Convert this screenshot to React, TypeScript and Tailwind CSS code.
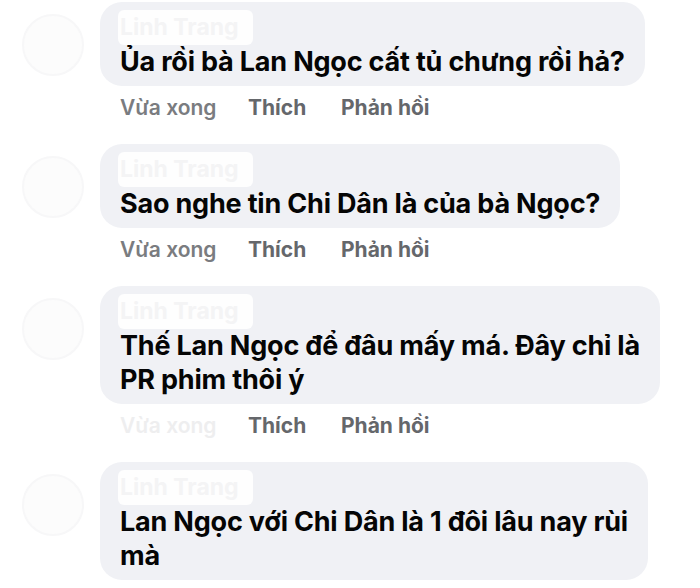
import React from "react"

interface CommentItem {
  lines: string[]
  fadedTime?: boolean
  showActions?: boolean
}

const comments: CommentItem[] = [
  { lines: ["Ủa rồi bà Lan Ngọc cất tủ chưng rồi hả?"], showActions: true },
  { lines: ["Sao nghe tin Chi Dân là của bà Ngọc?"], showActions: true },
  {
    lines: ["Thế Lan Ngọc để đâu mấy má. Đây chỉ là", "PR phim thôi ý"],
    fadedTime: true,
    showActions: true,
  },
  { lines: ["Lan Ngọc với Chi Dân là 1 đôi lâu nay rùi", "mà"] },
]

function Avatar() {
  return (
    <div className="ml-[22px] mt-[12px] h-[62px] w-[62px] shrink-0 rounded-full border-2 border-[#f7f7f8] bg-[#fcfcfc]" />
  )
}

function Comment({ item }: { item: CommentItem }) {
  return (
    <div className="flex">
      <div className="w-[100px] shrink-0">
        <Avatar />
      </div>
      <div className="flex flex-col items-start">
        <div className="rounded-[22px] bg-[#f0f1f5] px-[20px] pt-[8px] pb-[7px]">
          <div className="-ml-[2px] w-fit rounded-md bg-white/90 pl-[2px] pr-[14px] text-[23px] font-bold leading-[35px] text-[#f4f4f5]">
            Linh Trang
          </div>
          {item.lines.map((line, i) => (
            <div
              key={i}
              className="whitespace-nowrap text-[27px] font-bold leading-[34px] tracking-[-0.2px] text-[#050505]"
            >
              {line}
            </div>
          ))}
        </div>
        {item.showActions && (
          <div className="mt-[7px] mb-[21px] flex h-[30px] items-center pl-[20px] text-[21px] leading-[30px]">
            <span
              className={`w-[128px] font-semibold ${
                item.fadedTime ? "text-[#eeeeef]" : "text-[#7a7c80]"
              }`}
            >
              Vừa xong
            </span>
            <span className="w-[93px] font-bold text-[#65676b]">Thích</span>
            <span className="font-bold text-[#65676b]">Phản hồi</span>
          </div>
        )}
      </div>
    </div>
  )
}

export default function App() {
  return (
    <div
      className="h-[588px] w-[700px] overflow-hidden bg-white pt-[2px]"
      style={{ fontFamily: '"Inter", "Roboto", "Noto Sans", sans-serif' }}
    >
      {comments.map((c, i) => (
        <Comment key={i} item={c} />
      ))}
    </div>
  )
}
